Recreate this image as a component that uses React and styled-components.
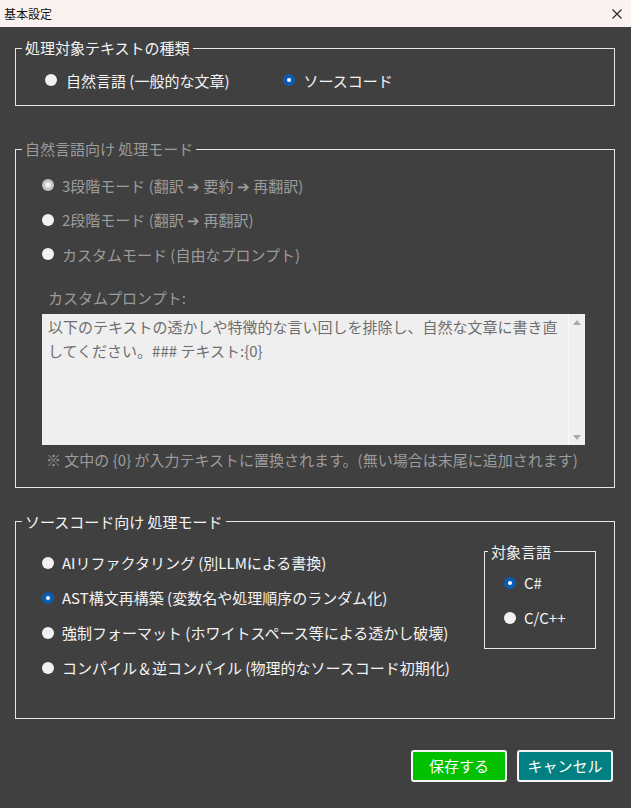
import React from 'react';
import styled, { createGlobalStyle } from 'styled-components';

const GlobalStyle = createGlobalStyle`
  html, body {
    margin: 0;
    padding: 0;
    background: #404040;
  }
  body {
    font-family: "Noto Sans CJK JP", "Noto Sans", sans-serif;
  }
`;

const Window = styled.div`
  width: 631px;
  height: 808px;
  background: #404040;
  display: flex;
  flex-direction: column;
  overflow: hidden;
`;

const TitleBar = styled.div`
  height: 27px;
  background: #f9f2f0;
  display: flex;
  align-items: center;
  justify-content: space-between;
  padding: 0 6px 0 4px;
  box-sizing: border-box;
  font-size: 12px;
  color: #111;
`;

const CloseButton = styled.span`
  display: flex;
  align-items: center;
  justify-content: center;
  width: 16px;
  height: 16px;
`;

const Content = styled.div`
  display: flex;
  flex-direction: column;
  padding: 11px 16px 0 15px;
`;

const Group = styled.fieldset`
  margin: ${({ $top }) => $top || 0}px 0 0 0;
  padding: 0;
  border: 1px solid #e6e6e6;
  min-width: 0;
  width: ${({ $width }) => $width || 600}px;
  box-sizing: border-box;
`;

const Legend = styled.legend`
  margin-left: ${({ $left }) => ($left !== undefined ? $left : 6)}px;
  padding: 0 3px;
  font-size: 15px;
  line-height: 20px;
  color: ${({ $disabled }) => ($disabled ? '#9c9c9c' : '#f4f4f4')};
`;

const GroupBody = styled.div`
  padding: ${({ $pad }) => $pad};
`;

const RadioRow = styled.div`
  display: flex;
  gap: ${({ $gap }) => $gap || 0}px;
`;

const RadioList = styled.div`
  display: flex;
  flex-direction: column;
  gap: ${({ $gap }) => $gap}px;
  padding-top: ${({ $top }) => $top || 0}px;
`;

const RadioItem = styled.label`
  display: flex;
  align-items: center;
  height: 24px;
  font-size: 15px;
  white-space: nowrap;
  color: ${({ $disabled }) => ($disabled ? '#9c9c9c' : '#f4f4f4')};
`;

const Dot = styled.span`
  width: 12px;
  height: 12px;
  border-radius: 50%;
  margin-right: ${({ $gap }) => $gap || 8}px;
  flex-shrink: 0;
  display: flex;
  align-items: center;
  justify-content: center;
  box-sizing: border-box;
  background: ${({ $checked, $disabled }) =>
    $checked ? ($disabled ? '#c4c4c4' : '#0b5cb0') : '#f2f2f2'};

  &::after {
    content: '';
    display: ${({ $checked }) => ($checked ? 'block' : 'none')};
    width: ${({ $disabled }) => ($disabled ? 6 : 4)}px;
    height: ${({ $disabled }) => ($disabled ? 6 : 4)}px;
    border-radius: 50%;
    background: ${({ $disabled }) => ($disabled ? '#efefef' : '#ffffff')};
  }
`;

const FieldLabel = styled.div`
  margin: 21.5px 0 0 6px;
  font-size: 15px;
  line-height: 20px;
  color: #9c9c9c;
`;

const PromptBox = styled.div`
  margin-top: 6px;
  width: 543px;
  height: 131px;
  background: #efefef;
  display: flex;
`;

const PromptText = styled.div`
  flex: 1;
  padding: 1px 4px 0 6px;
  font-size: 15px;
  line-height: 24px;
  color: #6e6e6e;
`;

const ScrollBar = styled.div`
  width: 16px;
  border-left: 1px solid #fafafa;
  display: flex;
  flex-direction: column;
  justify-content: space-between;
  align-items: center;
  padding: 6px 0 5px;
`;

const Note = styled.div`
  margin: 5px 0 0 4px;
  font-size: 15px;
  line-height: 20px;
  color: #9c9c9c;
  white-space: nowrap;
`;

const SplitRow = styled.div`
  display: flex;
  justify-content: space-between;
  align-items: flex-start;
`;

const Buttons = styled.div`
  display: flex;
  justify-content: flex-end;
  gap: 10px;
  margin-top: 31px;
  padding-right: 2px;
`;

const Button = styled.button`
  width: 96px;
  height: 32px;
  border: 2px solid #f4f4f4;
  border-radius: 3px;
  background: ${({ $variant }) => ($variant === 'save' ? '#00c000' : '#008080')};
  color: #ffffff;
  font-family: inherit;
  font-size: 15px;
  padding: 0;
  cursor: pointer;
`;

const Radio = ({ label, checked, disabled, gap }) => (
  <RadioItem $disabled={disabled}>
    <Dot $checked={checked} $disabled={disabled} $gap={gap} />
    {label}
  </RadioItem>
);

const Arrow = ({ up }) => (
  <svg width="8" height="5" viewBox="0 0 8 5">
    <path d={up ? 'M0 5 L4 0 L8 5 Z' : 'M0 0 L4 5 L8 0 Z'} fill="#a8a8a8" />
  </svg>
);

export default function App() {
  return (
    <Window>
      <GlobalStyle />
      <TitleBar>
        <span>基本設定</span>
        <CloseButton>
          <svg width="10" height="10" viewBox="0 0 10 10">
            <path d="M0.5 0.5 L9.5 9.5 M9.5 0.5 L0.5 9.5" stroke="#222" strokeWidth="1.1" />
          </svg>
        </CloseButton>
      </TitleBar>

      <Content>
        <Group>
          <Legend>処理対象テキストの種類</Legend>
          <GroupBody $pad="10px 16px 13px 29px">
            <RadioRow $gap={53}>
              <Radio label="自然言語 (一般的な文章)" gap={9} />
              <Radio label="ソースコード" checked gap={9} />
            </RadioRow>
          </GroupBody>
        </Group>

        <Group $top={33}>
          <Legend $disabled>自然言語向け 処理モード</Legend>
          <GroupBody $pad="14px 16px 17px 26px">
            <RadioList $gap={10.5}>
              <Radio label="3段階モード (翻訳 ➔ 要約 ➔ 再翻訳)" checked disabled />
              <Radio label="2段階モード (翻訳 ➔ 再翻訳)" disabled />
              <Radio label="カスタムモード (自由なプロンプト)" disabled />
            </RadioList>
            <FieldLabel>カスタムプロンプト:</FieldLabel>
            <PromptBox>
              <PromptText>
                以下のテキストの透かしや特徴的な言い回しを排除し、自然な文章に書き直してください。### テキスト:{'{0}'}
              </PromptText>
              <ScrollBar>
                <Arrow up />
                <Arrow />
              </ScrollBar>
            </PromptBox>
            <Note>※ 文中の {'{0}'} が入力テキストに置換されます。(無い場合は末尾に追加されます)</Note>
          </GroupBody>
        </Group>

        <Group $top={24}>
          <Legend>ソースコード向け 処理モード</Legend>
          <GroupBody $pad="10px 18px 38px 26px">
            <SplitRow>
              <RadioList $gap={11} $top={9}>
                <Radio label="AIリファクタリング (別LLMによる書換)" />
                <Radio label="AST構文再構築 (変数名や処理順序のランダム化)" checked />
                <Radio label="強制フォーマット (ホワイトスペース等による透かし破壊)" />
                <Radio label="コンパイル＆逆コンパイル (物理的なソースコード初期化)" />
              </RadioList>
              <Group $width={112}>
                <Legend $left={3}>対象言語</Legend>
                <GroupBody $pad="9px 0 18px 19px">
                  <RadioList $gap={11}>
                    <Radio label="C#" checked />
                    <Radio label="C/C++" />
                  </RadioList>
                </GroupBody>
              </Group>
            </SplitRow>
          </GroupBody>
        </Group>

        <Buttons>
          <Button $variant="save">保存する</Button>
          <Button>キャンセル</Button>
        </Buttons>
      </Content>
    </Window>
  );
}
